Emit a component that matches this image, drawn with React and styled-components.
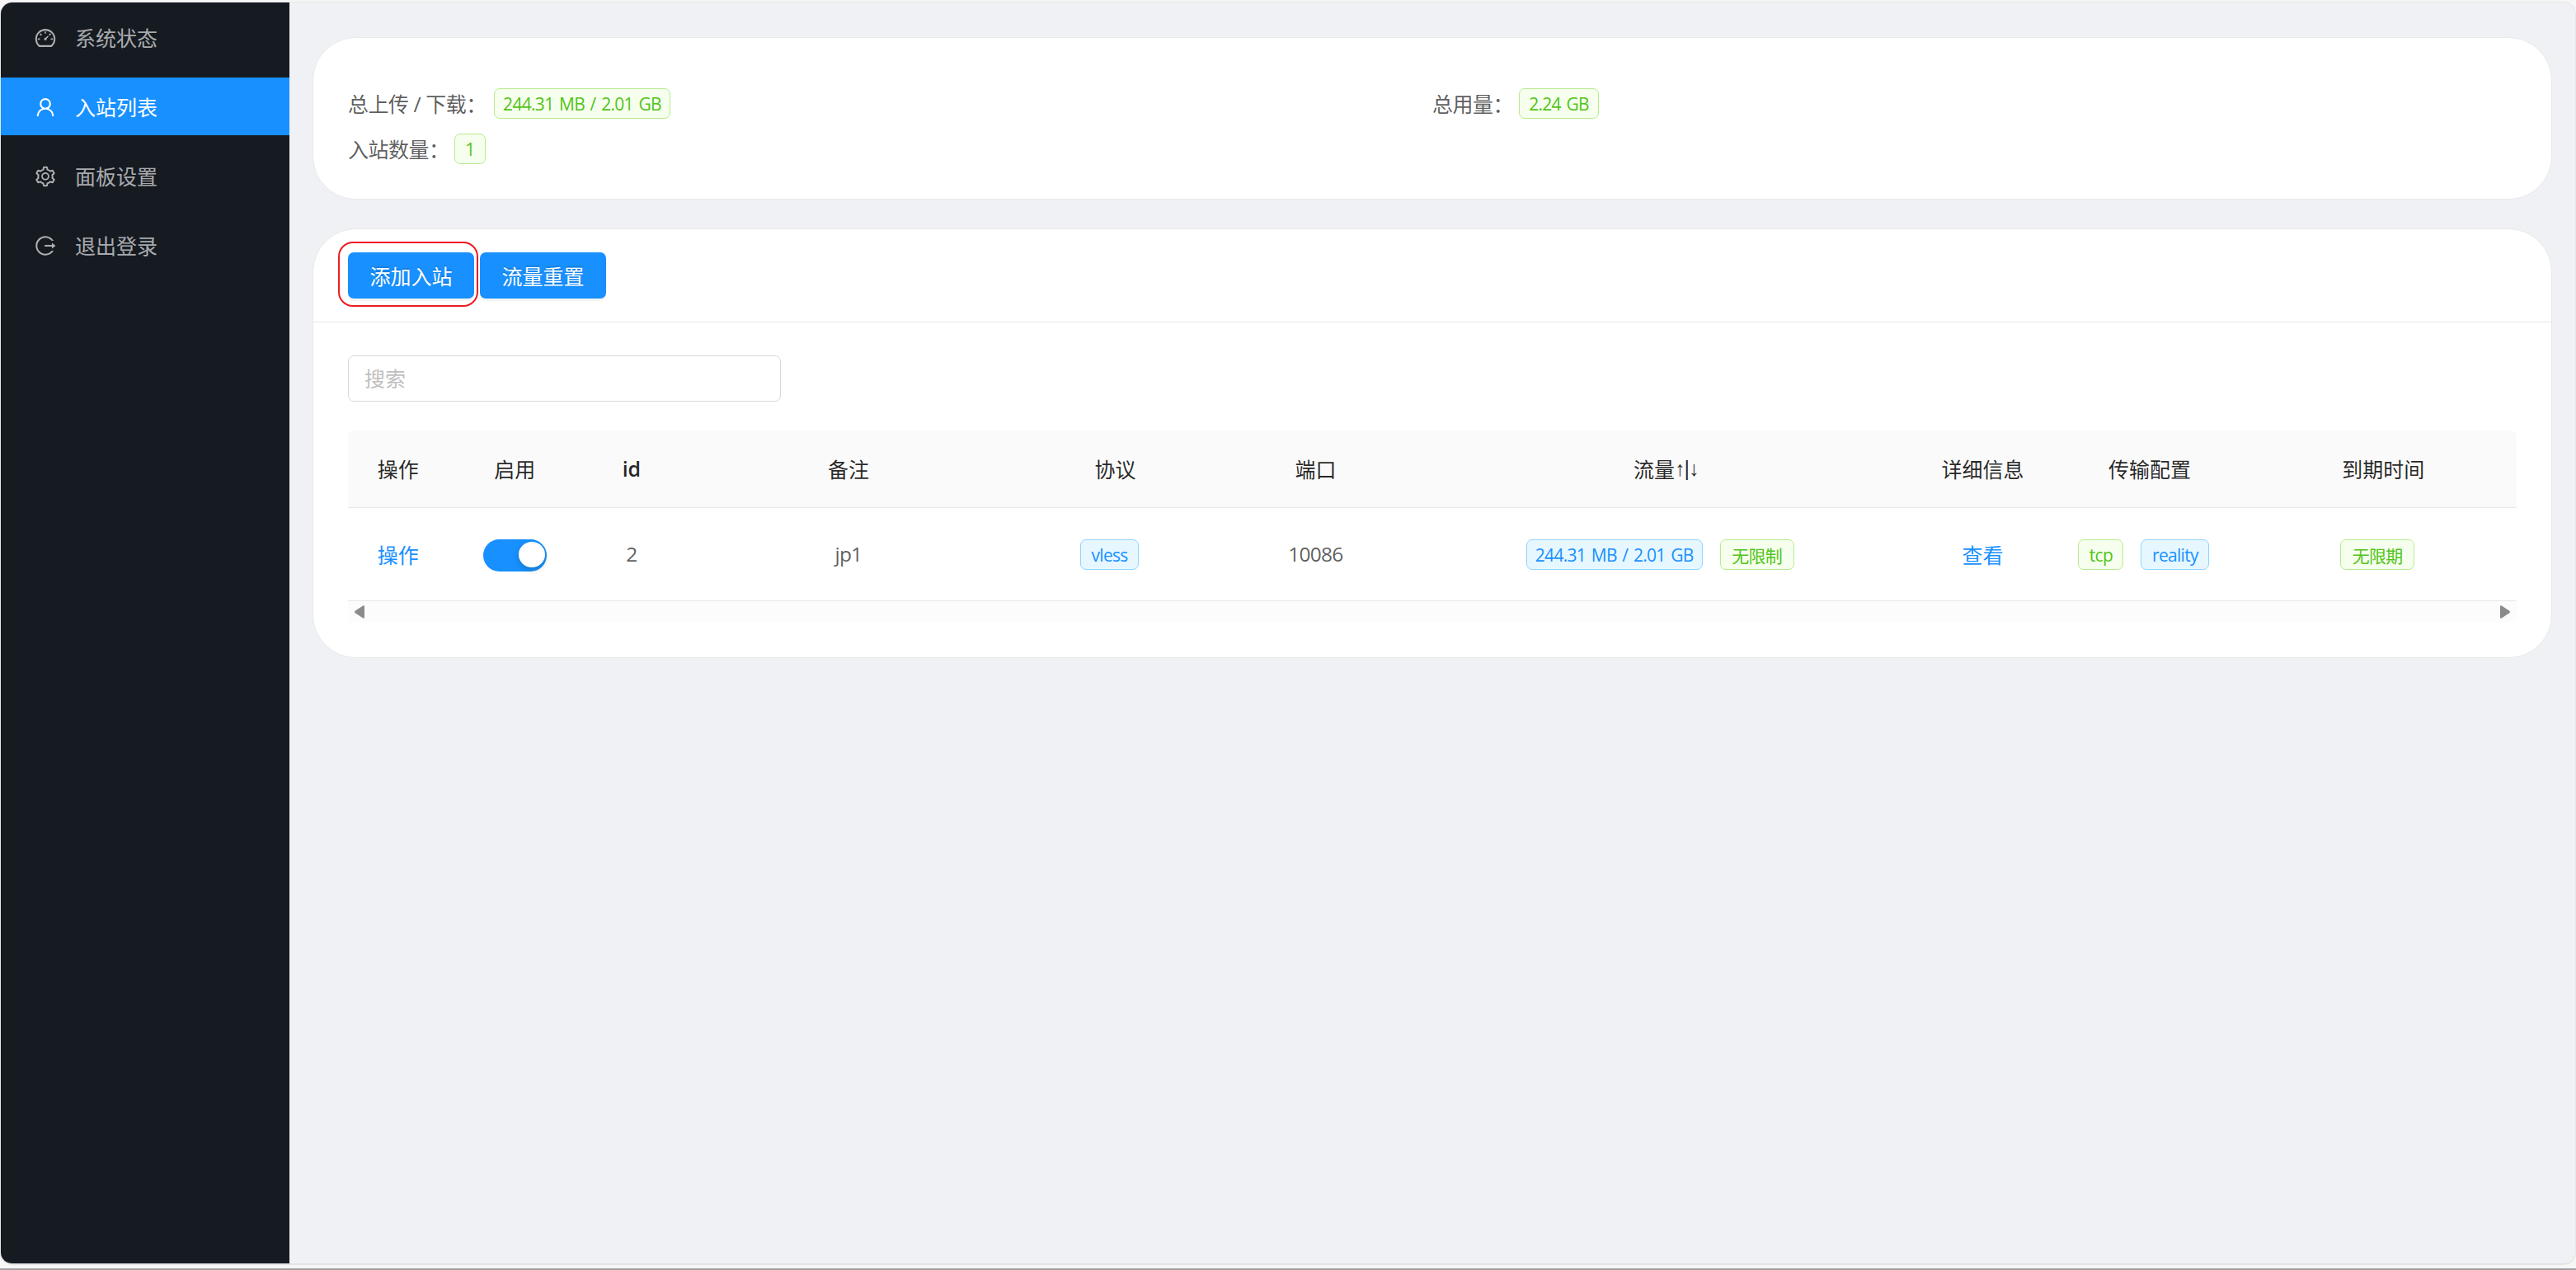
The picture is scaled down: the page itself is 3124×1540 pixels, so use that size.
import React from "react";
import styled, { createGlobalStyle } from "styled-components";
import {
  AiOutlineDashboard,
  AiOutlineUser,
  AiOutlineSetting,
  AiOutlineLogout,
} from "react-icons/ai";

const menu = [
  { label: "系统状态", icon: AiOutlineDashboard },
  { label: "入站列表", icon: AiOutlineUser, active: true },
  { label: "面板设置", icon: AiOutlineSetting },
  { label: "退出登录", icon: AiOutlineLogout },
];

const App = () => {
  return (
    <Window>
      <GlobalStyle />
      <Layout>
        <Sider>
          {menu.map(({ label, icon: Icon, active }) => (
            <MenuItem key={label} $active={active}>
              <Icon />
              <span>{label}</span>
            </MenuItem>
          ))}
        </Sider>
        <Content>
          <Card>
            <Stats>
              <Stat>
                <StatLabel $width="170px">总上传 / 下载：</StatLabel>
                <Tag $width="214px">244.31 MB / 2.01 GB</Tag>
              </Stat>
              <Stat>
                <StatLabel $width="98px">总用量：</StatLabel>
                <Tag $width="97px">2.24 GB</Tag>
              </Stat>
              <Stat>
                <StatLabel $width="122px">入站数量：</StatLabel>
                <Tag $width="38px">1</Tag>
              </Stat>
            </Stats>
          </Card>
          <Card>
            <CardHead>
              <Marked>
                <Button>添加入站</Button>
              </Marked>
              <Button>流量重置</Button>
            </CardHead>
            <CardBody>
              <Search placeholder="搜索" />
              <Table>
                <HeadRow>
                  <Cell>操作</Cell>
                  <Cell>启用</Cell>
                  <Cell>
                    <b>id</b>
                  </Cell>
                  <Cell>备注</Cell>
                  <Cell>协议</Cell>
                  <Cell>端口</Cell>
                  <Cell>
                    流量<Arrows>↑|↓</Arrows>
                  </Cell>
                  <Cell>详细信息</Cell>
                  <Cell>传输配置</Cell>
                  <Cell>到期时间</Cell>
                </HeadRow>
                <Row>
                  <Cell>
                    <Link>操作</Link>
                  </Cell>
                  <SwitchCell>
                    <Switch />
                  </SwitchCell>
                  <LatinCell>2</LatinCell>
                  <LatinCell>jp1</LatinCell>
                  <TagCell>
                    <Tag $blue $width="71px">vless</Tag>
                  </TagCell>
                  <LatinCell>10086</LatinCell>
                  <TagCell>
                    <Tag $blue $width="214px">244.31 MB / 2.01 GB</Tag>
                    <Tag $width="90px">无限制</Tag>
                  </TagCell>
                  <Cell>
                    <Link>查看</Link>
                  </Cell>
                  <TagCell>
                    <Tag $width="55px">tcp</Tag>
                    <Tag $blue $width="83px">reality</Tag>
                  </TagCell>
                  <TagCell>
                    <Tag $width="90px">无限期</Tag>
                  </TagCell>
                </Row>
                <ScrollBar>
                  <svg width="12" height="16" viewBox="0 0 12 16">
                    <path d="M10.5 0.3Q12 -0.3 12 1.5V14.5Q12 16.3 10.5 15.7L0.7 9.2Q-0.6 8 0.7 6.8Z" />
                  </svg>
                  <svg width="12" height="16" viewBox="0 0 12 16">
                    <path d="M1.5 0.3Q0 -0.3 0 1.5V14.5Q0 16.3 1.5 15.7L11.3 9.2Q12.6 8 11.3 6.8Z" />
                  </svg>
                </ScrollBar>
              </Table>
            </CardBody>
          </Card>
        </Content>
      </Layout>
    </Window>
  );
};

const GlobalStyle = createGlobalStyle`
  * {
    box-sizing: border-box;
  }
  body {
    margin: 0;
    font-family: "Open Sans", "Noto Sans CJK SC", sans-serif;
    font-size: 25px;
    font-weight: 400;
    color: rgba(0, 0, 0, 0.65);
  }
`;

const Window = styled.div`
  height: 1540px;
  padding: 3px 1px 5px;
  background: #f6f6f6;
  border-bottom: 2px solid #a0a0a0;
`;

const Layout = styled.div`
  display: flex;
  height: 1530px;
  border-radius: 14px;
  overflow: hidden;
  background: #f0f1f5;
  border-bottom: 1px solid #e0e1e4;
  box-shadow: 0 0 0 1px #e6e6e8;
`;

const Sider = styled.nav`
  width: 350px;
  flex-shrink: 0;
  padding-top: 7px;
  background: #161b22;
`;

const MenuItem = styled.div`
  display: flex;
  align-items: center;
  height: 70px;
  margin: 0 0 14px;
  padding: 2px 0 0 40px;
  column-gap: 22px;
  color: ${({ $active }) => ($active ? "#fff" : "rgba(255, 255, 255, 0.65)")};
  background: ${({ $active }) => ($active ? "#1890ff" : "transparent")};
  svg {
    width: 28px;
    height: 28px;
  }
  span {
    padding-bottom: 2px;
  }
`;

const Content = styled.main`
  flex: 1;
  display: flex;
  flex-direction: column;
  row-gap: 35px;
  padding: 42px 28px 0;
`;

const Card = styled.section`
  background: #fff;
  border: 1px solid #e8e8e8;
  border-radius: 52.5px;
`;

const Stats = styled.div`
  display: grid;
  grid-template-columns: 1fr 1fr;
  grid-auto-rows: 55px;
  height: 195px;
  padding: 52px 42px 33px;
`;

const Stat = styled.div`
  display: flex;
  align-items: center;
  column-gap: 7px;
`;

const StatLabel = styled.span`
  width: ${({ $width }) => $width};
  padding-bottom: 2px;
  letter-spacing: -0.5px;
  white-space: nowrap;
`;

const Tag = styled.span`
  display: inline-flex;
  align-items: center;
  justify-content: center;
  width: ${({ $width }) => $width};
  height: 37px;
  border: 1px solid ${({ $blue }) => ($blue ? "#91d5ff" : "#b7eb8f")};
  border-radius: 7px;
  background: ${({ $blue }) => ($blue ? "#e6f7ff" : "#f6ffed")};
  color: ${({ $blue }) => ($blue ? "#1890ff" : "#52c41a")};
  font-size: 21px;
  letter-spacing: -0.7px;
  word-spacing: 1.8px;
  white-space: nowrap;
`;

const CardHead = styled.div`
  display: flex;
  align-items: center;
  column-gap: 7px;
  height: 113px;
  padding: 0 42px;
  border-bottom: 1px solid #e8e8e8;
`;

/* red outline that hugs the primary action */
const Marked = styled.div`
  position: relative;
  &::after {
    content: "";
    position: absolute;
    inset: -13px -5px -10px -12px;
    border: 2px solid #ed1c24;
    border-radius: 18px;
    pointer-events: none;
  }
`;

const Button = styled.button`
  display: block;
  width: 153px;
  height: 56px;
  padding: 0;
  border: 0;
  border-radius: 7px;
  background: #1890ff;
  color: #fff;
  font: inherit;
  text-shadow: 0 -2px 0 rgba(0, 0, 0, 0.12);
  box-shadow: 0 3px 0 rgba(0, 0, 0, 0.045);
`;

const CardBody = styled.div`
  padding: 40px 42px 42px;
`;

const Search = styled.input`
  display: block;
  width: 525px;
  height: 56px;
  padding: 0 19px;
  border: 1px solid #d9d9d9;
  border-radius: 7px;
  font: inherit;
  &::placeholder {
    color: #bfbfbf;
  }
`;

const Table = styled.div`
  margin-top: 35px;
`;

const Row = styled.div`
  display: grid;
  grid-template-columns: 30fr 40fr 30fr 100fr 60fr 60fr 150fr 40fr 60fr 80fr;
  align-items: center;
  height: 113px;
  border-bottom: 1px solid #e8e8e8;
`;

const HeadRow = styled(Row)`
  height: 94px;
  background: #fafafa;
  border-radius: 7px 7px 0 0;
  color: rgba(0, 0, 0, 0.85);
  b {
    font-weight: 600;
  }
`;

const Cell = styled.div`
  display: flex;
  align-items: center;
  justify-content: center;
  min-width: 0;
  padding-bottom: 1px;
  white-space: nowrap;
`;

const LatinCell = styled(Cell)`
  font-size: 24.5px;
  letter-spacing: -0.8px;
`;

const TagCell = styled(Cell)`
  column-gap: 21px;
  padding: 1px 14px 0 0;
`;

const SwitchCell = styled(Cell)`
  padding: 3px 0 0;
`;

const Arrows = styled.span`
  font-family: "Liberation Sans", sans-serif;
  letter-spacing: -1px;
`;

const Link = styled.a`
  color: #1890ff;
`;

const Switch = styled.span`
  display: flex;
  justify-content: flex-end;
  width: 77px;
  height: 39px;
  padding: 3px 2px 0 0;
  border-radius: 20px;
  background: #1890ff;
  &::after {
    content: "";
    width: 32px;
    height: 31px;
    border-radius: 50%;
    background: #fff;
    box-shadow: 0 3px 7px rgba(0, 35, 11, 0.2);
  }
`;

const ScrollBar = styled.div`
  display: flex;
  align-items: center;
  justify-content: space-between;
  height: 26px;
  padding: 0 8px;
  background: #fcfcfc;
  fill: #8b8b8b;
`;

export default App;
